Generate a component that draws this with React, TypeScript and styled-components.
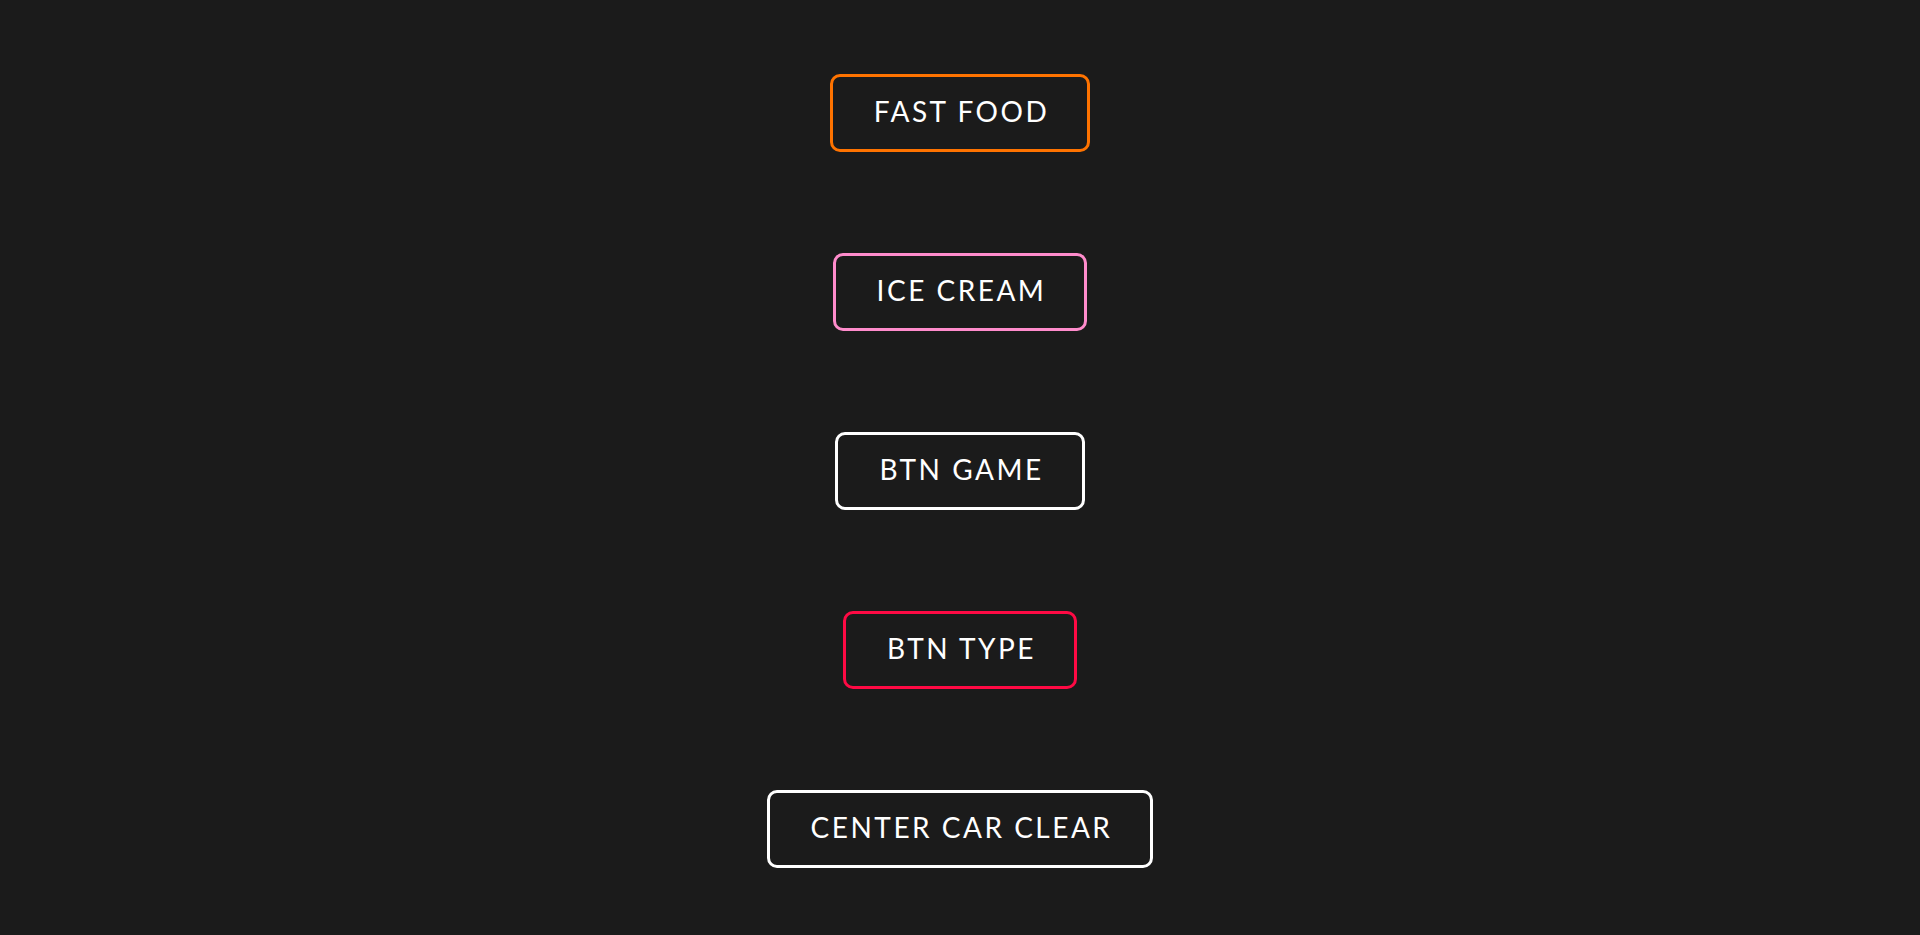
import React from 'react';
import styled, { createGlobalStyle } from 'styled-components';

const GlobalStyle = createGlobalStyle`
    html, body {
        margin: 0;
        padding: 0;
        background: #1b1b1b;
    }
`;

const Page = styled.div`
    min-height: 935px;
    box-sizing: border-box;
    padding-top: 74px;
    display: flex;
    flex-direction: column;
    align-items: center;
    gap: 101px;
    background: #1b1b1b;
`;

const OutlineButton = styled.button<{ $color: string }>`
    box-sizing: border-box;
    height: 78px;
    padding: 0 38px 4px 41px;
    display: flex;
    align-items: center;
    justify-content: center;
    background: transparent;
    border: 3px solid ${({ $color }) => $color};
    border-radius: 10px;
    color: #ffffff;
    font-family: Lato, 'Open Sans', sans-serif;
    font-size: 28px;
    font-weight: 400;
    letter-spacing: 2.5px;
    text-transform: uppercase;
    cursor: pointer;
`;

const buttons = [
    { label: 'Fast Food', color: '#ff7300' },
    { label: 'Ice Cream', color: '#ff8ccc' },
    { label: 'Btn Game', color: '#ffffff' },
    { label: 'Btn Type', color: '#ff0a44' },
    { label: 'Center Car Clear', color: '#ffffff' },
];

const App = () => (
    <>
        <GlobalStyle />
        <Page>
            {buttons.map(b => (
                <OutlineButton key={b.label} $color={b.color}>
                    {b.label}
                </OutlineButton>
            ))}
        </Page>
    </>
);

export default App;
